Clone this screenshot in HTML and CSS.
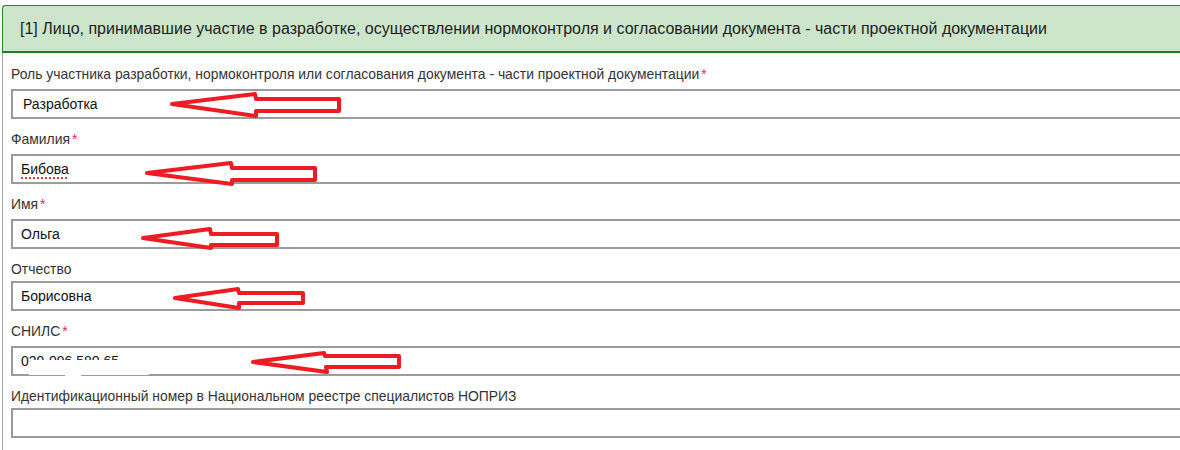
FILE: index.html
```html
<!DOCTYPE html>
<html lang="ru">
<head>
<meta charset="utf-8">
<title>Форма</title>
<link rel="stylesheet" href="styles.css">
</head>
<body>
<div class="page">
  <section class="panel">
    <div class="panel-head">[1] Лицо, принимавшие участие в разработке, осуществлении нормоконтроля и согласовании документа - части проектной документации</div>
    <div class="panel-body">
      <div class="field">
        <div class="label req">Роль участника разработки, нормоконтроля или согласования документа - части проектной документации<span class="star">*</span></div>
        <div class="input select">Разработка</div>
      </div>
      <div class="field">
        <div class="label req">Фамилия<span class="star">*</span></div>
        <div class="input"><span class="spell">Бибова</span></div>
      </div>
      <div class="field">
        <div class="label req">Имя<span class="star">*</span></div>
        <div class="input">Ольга</div>
      </div>
      <div class="field">
        <div class="label">Отчество</div>
        <div class="input">Борисовна</div>
      </div>
      <div class="field">
        <div class="label req">СНИЛС<span class="star">*</span></div>
        <div class="input snils">029-096 580 65<span class="erase"></span><span class="erase2"></span></div>
      </div>
      <div class="field">
        <div class="label">Идентификационный номер в Национальном реестре специалистов НОПРИЗ</div>
        <div class="input"></div>
      </div>
    </div>
  </section>
  <svg class="annot" width="1180" height="450" viewBox="0 0 1180 450">
    <g fill="none" stroke="#ed1c24" stroke-width="4" stroke-linejoin="round">
      <polygon points="172,104 255,94 256,99 339,99 339,111 256,111 256,116"/>
      <polygon points="147,173 231,163 232,168 315,168 315,180 232,180 232,184"/>
      <polygon points="143,238 210,229 211,234 277,234 277,245 211,245 211,248"/>
      <polygon points="175,298 238,289 239,293 303,293 303,303 239,303 239,308"/>
      <polygon points="253,362 324,353 325,356 399,356 399,367 326,367 327,372"/>
    </g>
  </svg>
</div>
</body>
</html>
```
FILE: styles.css
```css
html, body {
  margin: 0;
  padding: 0;
  background: #fff;
  overflow: hidden;
}
body {
  width: 1180px;
  height: 450px;
  font-family: "Liberation Sans", Arial, sans-serif;
}
.page {
  position: relative;
  width: 1180px;
  height: 450px;
  padding: 5px 0 0 2px;
  box-sizing: border-box;
}
.panel {
  width: 1220px;
  border-left: 1px solid #a8a8a8;
  border-top-left-radius: 4px;
  min-height: 460px;
}
.panel-head {
  background: #cce5cb;
  border-top: 1px solid #1d8a1d;
  border-bottom: 2px solid #1d7f1d;
  border-left: 1px solid #1d8a1d;
  margin-left: -1px;
  border-top-left-radius: 4px;
  height: 45px;
  box-sizing: content-box;
  padding-left: 17px;
  font-size: 16px;
  line-height: 45px;
  color: #1e1e1e;
}
.panel-body {
  padding: 12px 0 0 8px;
}
.field {
  margin-bottom: 11px;
}
.label {
  font-size: 13.9px;
  line-height: 18px;
  color: #333;
  margin-bottom: 3px;
}
.label.req {
  margin-bottom: 6px;
}
.star {
  color: #e5285b;
  margin-left: 2px;
}
.input {
  position: relative;
  height: 30px;
  box-sizing: border-box;
  border: 2px solid #9b9b9b;
  padding-left: 8px;
  font-size: 14px;
  line-height: 26px;
  color: #111;
  width: 1200px;
}
.input.select {
  padding-left: 10px;
}
.spell {
  text-decoration: underline dotted #e0383f;
  text-decoration-thickness: 2px;
  text-underline-offset: 3px;
}
.erase {
  position: absolute;
  left: 16px;
  top: 12px;
  width: 120px;
  height: 15px;
  background: #fff;
}
.erase2 {
  position: absolute;
  left: 52px;
  top: 26px;
  width: 16px;
  height: 3px;
  background: #fff;
}
.annot {
  position: absolute;
  left: 0;
  top: 0;
  pointer-events: none;
}
```
